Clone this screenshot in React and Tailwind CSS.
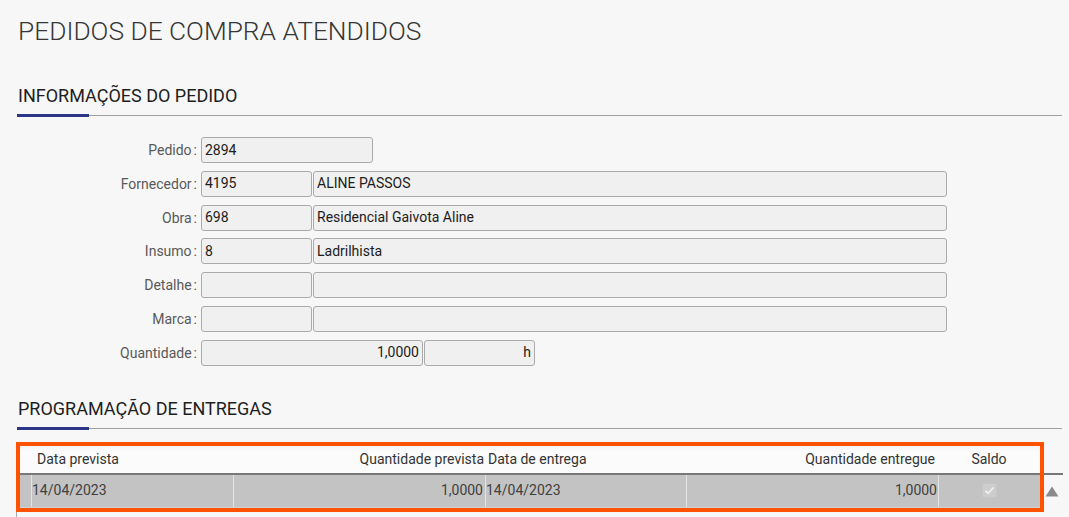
import React from "react";

function Field({ label, children }) {
  return (
    <div className="flex items-center h-[26px]">
      <div className="w-[184px] pr-[4px] text-right text-[14px] text-[#595959] leading-none">
        {label}
        <span className="ml-[2px]">:</span>
      </div>
      <div className="flex items-center gap-px">{children}</div>
    </div>
  );
}

function Input({ w, value, right }) {
  return (
    <div
      className={`h-[26px] border border-[#aaaaaa] rounded-[3px] bg-[#f0f0f0] px-[3px] flex items-center text-[14px] text-[#1c1c1c] ${w} ${right ? "justify-end" : ""}`}
    >
      {value}
    </div>
  );
}

function SectionHeader({ title, mt }) {
  return (
    <div className={mt}>
      <h2 className="text-[18px] leading-[20px] text-[#1e1e1e] pl-px font-normal">{title}</h2>
      <div className="flex items-center mt-[8px] h-[3px]">
        <div className="w-[72px] h-[3px] bg-[#2c3586]" />
        <div className="flex-1 h-px bg-[#a0a0a0]" />
      </div>
    </div>
  );
}

export default function App() {
  return (
    <div className="min-h-screen w-[1069px] bg-[#f7f7f7] font-['Roboto',sans-serif] pl-[17px] pr-[7px] pt-[16px] overflow-hidden">
      <h1 className="text-[26.3px] font-light leading-[30px] text-[#363636] pl-px">
        PEDIDOS DE COMPRA ATENDIDOS
      </h1>

      <SectionHeader title="INFORMAÇÕES DO PEDIDO" mt="mt-[40px]" />

      <div className="mt-[20px] flex flex-col gap-[7.8px]">
        <Field label="Pedido">
          <Input w="w-[172px]" value="2894" />
        </Field>
        <Field label="Fornecedor">
          <Input w="w-[111px]" value="4195" />
          <Input w="w-[634px]" value="ALINE PASSOS" />
        </Field>
        <Field label="Obra">
          <Input w="w-[111px]" value="698" />
          <Input w="w-[634px]" value="Residencial Gaivota Aline" />
        </Field>
        <Field label="Insumo">
          <Input w="w-[111px]" value="8" />
          <Input w="w-[634px]" value="Ladrilhista" />
        </Field>
        <Field label="Detalhe">
          <Input w="w-[111px]" value="" />
          <Input w="w-[634px]" value="" />
        </Field>
        <Field label="Marca">
          <Input w="w-[111px]" value="" />
          <Input w="w-[634px]" value="" />
        </Field>
        <Field label="Quantidade">
          <Input w="w-[222px]" value="1,0000" right />
          <Input w="w-[111px]" value="h" right />
        </Field>
      </div>

      <SectionHeader title="PROGRAMAÇÃO DE ENTREGAS" mt="mt-[33px]" />

      <div className="relative mt-[12px] -ml-px w-[1047px] text-[14px]">
        {/* header */}
        <div className="flex h-[31px]">
          <div className="w-[1024px] flex bg-[#fbfbfb] pt-[4px] text-[#333] shadow-[inset_0_7px_6px_-3px_rgba(0,0,0,0.07)]">
            <div className="w-[15px]" />
            <div className="w-[202px] flex items-center pl-[6px]">Data prevista</div>
            <div className="w-[252px] flex items-center justify-end pr-[1px]">Quantidade prevista</div>
            <div className="w-[201px] flex items-center pl-[3px]">Data de entrega</div>
            <div className="w-[252px] flex items-center justify-end pr-[3px]">Quantidade entregue</div>
            <div className="w-[102px] flex items-center justify-center">Saldo</div>
          </div>
          <div className="flex-1" />
        </div>
        <div className="h-[2px] bg-[#787878]" />
        {/* row */}
        <div className="flex h-[33px]">
          <div className="w-[1024px] flex bg-[#c3c3c3] text-[#404040] border-b border-[#d2d2d2]">
            <div className="w-[15px]" />
            <div className="w-[202px] border-l border-[#e4e4e4] flex items-center">14/04/2023</div>
            <div className="w-[252px] border-l border-[#e4e4e4] flex items-center justify-end pr-[2px]">1,0000</div>
            <div className="w-[201px] border-l border-[#e4e4e4] flex items-center">14/04/2023</div>
            <div className="w-[252px] border-l border-[#e4e4e4] flex items-center justify-end pr-[1px]">1,0000</div>
            <div className="w-[102px] border-l border-[#e4e4e4] flex items-center justify-center">
              <div className="w-[15px] h-[15px] rounded-[2px] bg-[#cdcdcd] border border-[#c6c6c6] flex items-center justify-center">
                <svg width="11" height="9" viewBox="0 0 11 9">
                  <path d="M1.5 4.8 L4.2 7.3 L9.5 1.5" fill="none" stroke="#efefef" strokeWidth="1.8" />
                </svg>
              </div>
            </div>
          </div>
          <div className="flex-1 flex items-center pl-[5px]">
            <svg width="14" height="11" viewBox="0 0 14 11">
              <path d="M7 0.5 L13.5 10.5 L0.5 10.5 Z" fill="#8a8a8a" />
            </svg>
          </div>
        </div>
        <div className="h-[20px] w-[1024px] border-l border-[#a8a8a8]" />

        <div className="absolute left-0 top-0 w-[1028px] h-[70px] border-4 border-[#ff5200] pointer-events-none" />
      </div>
    </div>
  );
}
